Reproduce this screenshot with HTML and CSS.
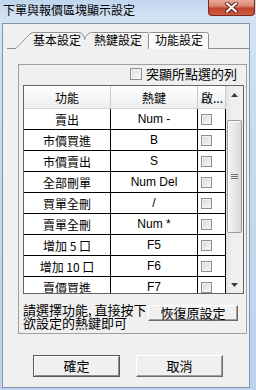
FILE: index.html
```html
<!DOCTYPE html>
<html lang="zh-Hant">
<head>
<meta charset="utf-8">
<link rel="stylesheet" href="styles.css">
</head>
<body>
<div class="window">
  <div class="titlebar">
    <span class="title">下單與報價區塊顯示設定</span>
    <span class="close">
      <svg width="13" height="11" viewBox="0 0 13 11">
        <path d="M2 1.5 L11 9.5 M11 1.5 L2 9.5" stroke="#5b1d12" stroke-width="4" stroke-linecap="round"/>
        <path d="M2 1.5 L11 9.5 M11 1.5 L2 9.5" stroke="#fff" stroke-width="2.2" stroke-linecap="round"/>
      </svg>
    </span>
  </div>
  <div class="client">
    <div class="tabs">
      <svg class="tab-lines" width="246" height="21" viewBox="0 0 246 21">
        <path d="M81 12 Q83 8 85 6 Q87 4.5 90 4.5 L145 4.5" fill="#f0f0f0" stroke="#8c8e94"/>
        <path d="M82 13 Q84 9 86 7 Q88 5.5 90 5.5 L144 5.5" fill="none" stroke="#fff"/>
        <path d="M4 20.5 H13 L27 6 Q29 4.5 32 4.5 H76 Q79 4.5 80.5 7.5 L82 12" fill="#f0f0f0" stroke="#8c8e94"/>
        <path d="M15 20 L28 7 Q30 5.5 32 5.5 H75" fill="none" stroke="#fff"/>
        <path d="M145.5 21 V6.5 Q145.5 4.5 147.5 4.5 H203.5 Q205.5 4.5 205.5 6.5 V20.5 H246" fill="#fafafa" stroke="#8c8e94"/>
        <path d="M146.5 21 V6.5 Q146.5 5.5 147.5 5.5 H203.5" fill="none" stroke="#fff"/>
      </svg>
      <span class="tab">基本設定</span>
      <span class="tab">熱鍵設定</span>
      <span class="tab">功能設定</span>
    </div>
    <div class="page">
      <div class="frame">
        <div class="opt-row">
          <span class="checkbox"></span>
          <span class="opt-label">突顯所點選的列</span>
        </div>
        <div class="grid-box">
          <div class="grid">
            <div class="hd">功能</div>
            <div class="hd">熱鍵</div>
            <div class="hd hd-last">啟...</div>

            <div class="c">賣出</div><div class="c key">Num -</div><div class="c cb"><span class="mini"></span></div>
            <div class="c">市價買進</div><div class="c key">B</div><div class="c cb"><span class="mini"></span></div>
            <div class="c">市價賣出</div><div class="c key">S</div><div class="c cb"><span class="mini"></span></div>
            <div class="c">全部刪單</div><div class="c key">Num Del</div><div class="c cb"><span class="mini"></span></div>
            <div class="c">買單全刪</div><div class="c key">/</div><div class="c cb"><span class="mini"></span></div>
            <div class="c">賣單全刪</div><div class="c key">Num *</div><div class="c cb"><span class="mini"></span></div>
            <div class="c">增加 5 口</div><div class="c key">F5</div><div class="c cb"><span class="mini"></span></div>
            <div class="c">增加 10 口</div><div class="c key">F6</div><div class="c cb"><span class="mini"></span></div>
            <div class="c">賣價買進</div><div class="c key">F7</div><div class="c cb"><span class="mini"></span></div>
          </div>
          <div class="sb">
            <div class="sb-btn">
              <svg width="7" height="4" viewBox="0 0 7 4"><path d="M0 4 L3.5 0 L7 4 Z" fill="#3c3c3c"/></svg>
            </div>
            <div class="sb-gap"></div>
            <div class="thumb">
              <svg width="7" height="6" viewBox="0 0 7 6"><path d="M0 0.5 H7 M0 2.5 H7 M0 4.5 H7" stroke="#6f6f6f"/></svg>
            </div>
            <div class="sb-rest"></div>
            <div class="sb-btn">
              <svg width="7" height="4" viewBox="0 0 7 4"><path d="M0 0 L3.5 4 L7 0 Z" fill="#3c3c3c"/></svg>
            </div>
          </div>
        </div>
        <div class="foot">
          <p class="hint">請選擇功能, 直接按下<br>欲設定的熱鍵即可</p>
          <button class="btn reset">恢復原設定</button>
        </div>
      </div>
    </div>
    <div class="actions">
      <button class="btn default">確定</button>
      <button class="btn">取消</button>
    </div>
  </div>
</div>
</body>
</html>
```

FILE: styles.css
```css
* {
  box-sizing: border-box;
  margin: 0;
  padding: 0;
}

body {
  width: 256px;
  height: 390px;
  overflow: hidden;
  font-family: "Noto Sans CJK TC", "Noto Sans CJK SC", sans-serif;
  font-size: 12px;
  color: #000;
}

.window {
  width: 256px;
  height: 390px;
  padding: 0 6px 2px 2px;
  display: flex;
  flex-direction: column;
  background: linear-gradient(180deg, #c0d5ee 0, #d4e3f4 18px, #c8dbf0 120px, #bcd2ec 390px);
}

.titlebar {
  height: 23px;
  margin-right: -6px;
  display: flex;
  justify-content: space-between;
  align-items: flex-start;
}

.title {
  padding: 3px 0 0 1px;
  line-height: 14px;
  font-size: 12px;
  white-space: nowrap;
}

.close {
  width: 47px;
  height: 16px;
  margin-right: 1px;
  border: 1px solid #7b2b1d;
  border-top: none;
  border-radius: 0 0 4px 4px;
  background: linear-gradient(180deg, #e8aa98 0, #d98670 40%, #c2432a 55%, #cf5b41 100%);
  display: flex;
  align-items: center;
  justify-content: center;
}

.client {
  flex: 1;
  background: #f0f0f0;
  border: 1px solid #8194ab;
  display: flex;
  flex-direction: column;
}

/* Tabs */
.tabs {
  position: relative;
  height: 21px;
  margin-top: 4px;
  padding-left: 30px;
  display: flex;
  gap: 13px;
}

.tab-lines {
  position: absolute;
  left: 0;
  top: 0;
}

.tab {
  position: relative;
  width: 48px;
  padding-top: 4px;
  line-height: 16px;
  font-size: 12px;
  white-space: nowrap;
}

/* Page */
.page {
  height: 285px;
  padding: 15px 2px 0 15px;
}

.frame {
  width: 229px;
  height: 270px;
  border: 1px solid #a0a0a0;
  display: flex;
  flex-direction: column;
}

.opt-row {
  height: 13px;
  margin-top: 2px;
  padding-right: 9px;
  display: flex;
  justify-content: flex-end;
  align-items: center;
  gap: 4px;
}

.checkbox {
  width: 12px;
  height: 12px;
  border: 1px solid #8e8f8f;
  background: linear-gradient(135deg, #dcdcdc, #fbfbfb);
  box-shadow: inset 0 0 0 1px #f4f4f4;
}

.opt-label {
  font-size: 13px;
  line-height: 13px;
  white-space: nowrap;
}

/* Grid */
.grid-box {
  width: 221px;
  height: 209px;
  margin: 5px 0 0 4px;
  border: 1px solid #646464;
  display: flex;
  background: #fff;
  overflow: hidden;
}

.grid {
  width: 202px;
  display: grid;
  grid-template-columns: 87px 87px 28px;
  grid-template-rows: 23px;
  grid-auto-rows: 21px;
  align-content: start;
  overflow: hidden;
}

.hd {
  display: flex;
  align-items: center;
  justify-content: center;
  background: linear-gradient(180deg, #ffffff 0, #f5f6f7 50%, #eceef0 100%);
  border-bottom: 1px solid #d5d5d5;
  border-right: 1px solid #c9c9c9;
  font-size: 12px;
}

.hd-last {
  justify-content: flex-start;
  padding-left: 3px;
  border-right: 1px solid #c9c9c9;
}

.c {
  display: flex;
  align-items: center;
  justify-content: center;
  border-right: 1px solid #000;
  border-bottom: 1px solid #000;
  font-size: 12px;
  white-space: nowrap;
}

.key {
  font-family: "Liberation Sans", Arial, sans-serif;
  font-size: 12px;
}

.cb {
  justify-content: flex-start;
  padding-left: 3px;
}

.mini {
  width: 11px;
  height: 11px;
  border: 1px solid #8e8f8f;
  background: linear-gradient(135deg, #d8d8d8, #f8f8f8);
  box-shadow: inset 0 0 0 1px #f2f2f2;
}

/* Scrollbar */
.sb {
  width: 17px;
  display: flex;
  flex-direction: column;
  background: linear-gradient(90deg, #e3e3e3 0, #eeeeee 30%, #f0f0f0 100%);
}

.sb-btn {
  height: 17px;
  display: flex;
  align-items: center;
  justify-content: center;
}

.sb-gap {
  height: 17px;
}

.thumb {
  height: 113px;
  margin: 0 1px;
  border: 1px solid #9b9b9b;
  border-radius: 2px;
  background: linear-gradient(90deg, #f4f4f4 0, #e8e8e8 50%, #d9d9d9 100%);
  box-shadow: inset 1px 1px #fff;
  display: flex;
  align-items: center;
  justify-content: center;
}

.sb-rest {
  flex: 1;
}

/* Footer */
.foot {
  margin-top: 9px;
  padding-left: 4px;
  display: flex;
  align-items: flex-start;
}

.hint {
  width: 125px;
  font-size: 13px;
  line-height: 13px;
  white-space: nowrap;
}

.btn {
  font-family: "Noto Sans CJK TC", "Noto Sans CJK SC", sans-serif;
  font-size: 13px;
  line-height: 14px;
  color: #000;
  background: #f0f0f0;
  border: 1px solid;
  border-color: #ffffff #696969 #696969 #ffffff;
  box-shadow: inset -1px -1px #a0a0a0;
  display: flex;
  align-items: center;
  justify-content: center;
}

.reset {
  width: 90px;
  height: 16px;
  margin-top: 2px;
}

.actions {
  margin-top: 21px;
  padding-left: 30px;
  display: flex;
  gap: 16px;
}

.actions .btn {
  width: 87px;
  height: 22px;
}

.btn.default {
  border-color: #5a5a5a;
  box-shadow: inset 1px 1px #fff, inset -1px -1px #8a8a8a;
}
```
